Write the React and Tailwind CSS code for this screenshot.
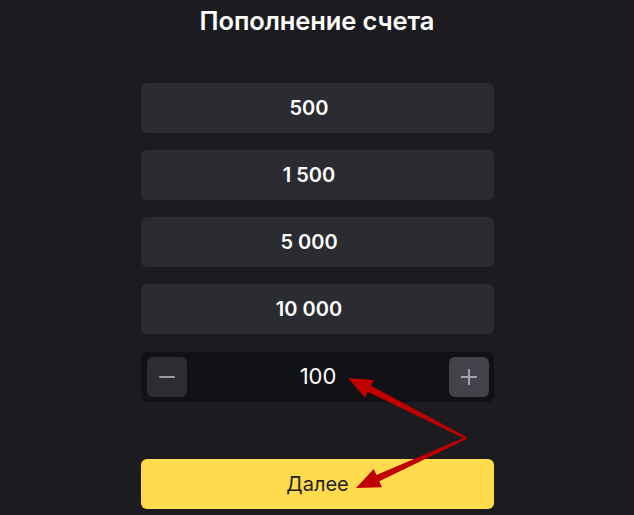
import React from "react";

function Arrow({ x1, y1, x2, y2 }) {
  const dx = x2 - x1, dy = y2 - y1;
  const len = Math.hypot(dx, dy);
  const ux = dx / len, uy = dy / len;
  const px = -uy, py = ux;
  const headLen = 24, headW = 10, w0 = 1, w1 = 3.5;
  const bx = x2 - ux * headLen, by = y2 - uy * headLen;
  const pts = [
    [x1 + px * w0, y1 + py * w0],
    [bx + px * w1, by + py * w1],
    [bx + px * headW, by + py * headW],
    [x2, y2],
    [bx - px * headW, by - py * headW],
    [bx - px * w1, by - py * w1],
    [x1 - px * w0, y1 - py * w0],
  ];
  return <polygon points={pts.map((p) => p.join(",")).join(" ")} fill="#c00000" />;
}

export default function App() {
  const amounts = ["500", "1 500", "5 000", "10 000"];
  return (
    <div className="relative w-[634px] h-[515px] overflow-hidden bg-[#1c1c20]" style={{ fontFamily: "Inter, 'Noto Sans', sans-serif" }}>
      <h1 className="text-center text-white text-[25.5px] font-semibold leading-none pt-[8px] tracking-[-0.1px]">Пополнение счета</h1>
      <div className="w-[353px] ml-[141px] mt-[49px] flex flex-col gap-[17.3px]">
        {amounts.map((a) => (
          <div key={a} className="h-[50px] rounded-[6px] bg-[#2b2c31] flex items-center justify-center pr-[17px] text-white text-[20px] font-semibold">
            {a}
          </div>
        ))}
        <div className="h-[50px] rounded-[6px] bg-[#111216] flex items-center justify-between pl-[6px] pr-[5px]">
          <div className="w-[40px] h-[40px] rounded-[6px] bg-[#2c2d32] flex items-center justify-center">
            <div className="w-[16px] h-[2px] bg-[#9a9ba2] rounded"></div>
          </div>
          <div className="text-white text-[22px] font-normal">100</div>
          <div className="w-[40px] h-[40px] rounded-[6px] bg-[#42434b] flex items-center justify-center">
            <svg width="18" height="18" viewBox="0 0 18 18"><path d="M9 1v16M1 9h16" stroke="#a3a4ab" strokeWidth="2" /></svg>
          </div>
        </div>
        <div className="h-[50px] mt-[40px] rounded-[6px] bg-[#ffdb4d] flex items-center justify-center text-[#222] text-[20px] font-normal">
          Далее
        </div>
      </div>
      <svg className="absolute inset-0 pointer-events-none" width="634" height="515">
        <Arrow x1={466} y1={438} x2={348} y2={378} />
        <Arrow x1={466} y1={438} x2={356} y2={488} />
      </svg>
    </div>
  );
}
